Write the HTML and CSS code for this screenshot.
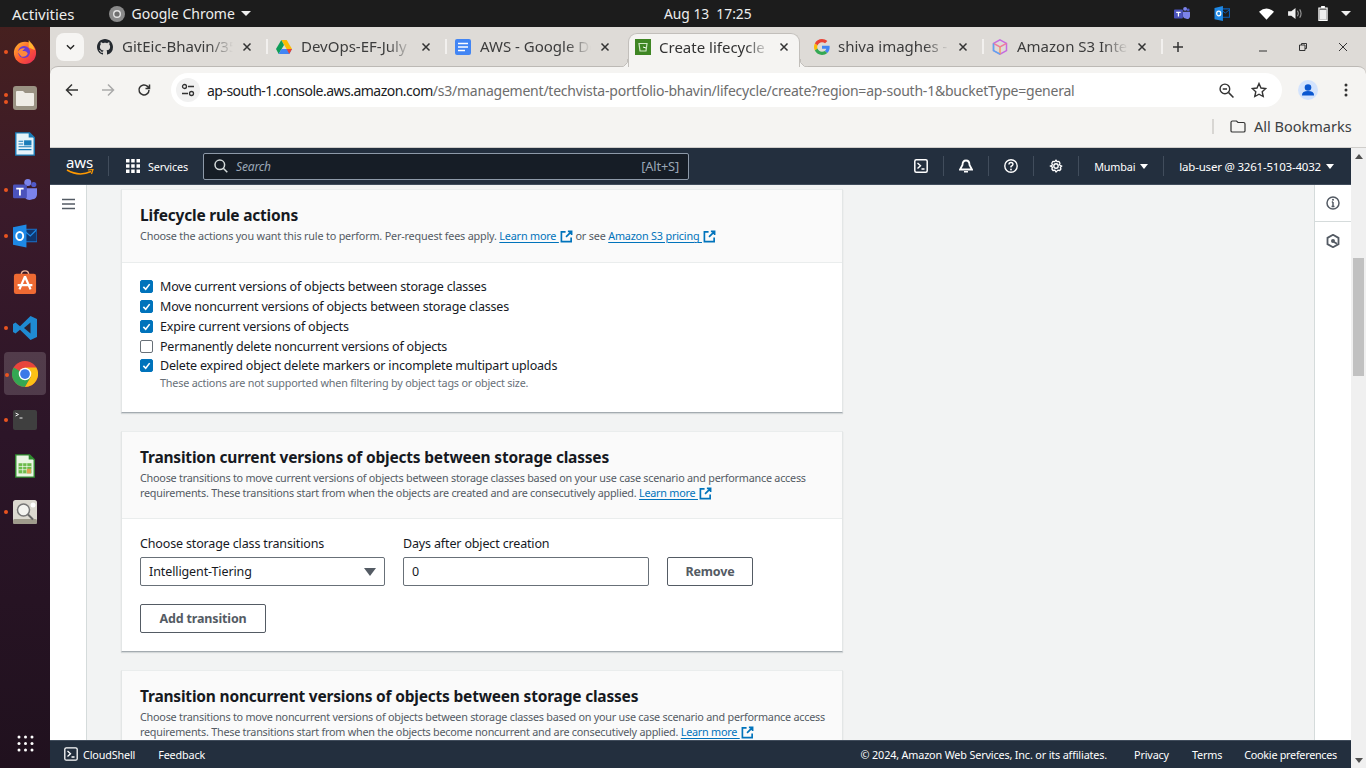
FILE: index.html
```html
<!DOCTYPE html>
<html lang="en">
<head>
<meta charset="utf-8">
<title>Create lifecycle rule</title>
<link rel="stylesheet" href="styles.css">
</head>
<body>
<svg class="defs" width="0" height="0"><defs><symbol id="x" viewBox="0 0 10 10"><path d="M1.500 1.500l7 7M8.500 1.500l-7 7" stroke="#333" stroke-width="1.500"/></symbol></defs></svg>
<div class="topbar">
  <span class="activities">Activities</span>
  <span class="appmenu">
    <svg class="appicon" viewBox="0 0 16 16"><circle cx="8" cy="8" r="8" fill="#8a8a8a"/><circle cx="8" cy="8" r="4" fill="#e4e4e4"/><circle cx="8" cy="8" r="2.600" fill="#6e6e6e"/></svg>
    Google Chrome <i class="caret-w"></i>
  </span>
  <span class="clock">Aug 13&nbsp; 17:25</span>
  <span class="tray">
    <svg class="t-teams" viewBox="0 0 18 16"><circle cx="12.500" cy="2.800" r="2.200" fill="#7b83eb"/><circle cx="16" cy="4" r="1.600" fill="#5059c9"/><path d="M10 6h8v5a3 3 0 0 1-4 3 4 4 0 0 1-4-3z" fill="#7b83eb"/><rect x="0" y="3.500" width="10" height="10" rx="1" fill="#4b53bc"/><path d="M2.500 6h5v1.300h-1.800v4.200h-1.400v-4.200h-1.800z" fill="#fff"/></svg>
    <svg class="t-outlook" viewBox="0 0 16 16"><path d="M7 3h9v9H7z" fill="none" stroke="#0a5db5" stroke-width="1.200"/><path d="M7 4l4.500 3.500L16 4" fill="none" stroke="#0a5db5"/><path d="M0 2l9-2v16l-9-2z" fill="#1e88e5"/><ellipse cx="4.500" cy="8" rx="2.200" ry="2.500" fill="none" stroke="#fff" stroke-width="1.300"/></svg>
    <svg class="t-wifi" viewBox="0 0 16 12"><path d="M0 3.500Q8-3 16 3.500L8 12z" fill="#fff"/></svg>
    <svg class="t-vol" viewBox="0 0 16 14"><path d="M0 4.500h3.500L8 1v12L3.500 9.500H0z" fill="#eee"/><path d="M10 4q2 3 0 6M12.500 2.500q3 4.500 0 9" fill="none" stroke="#999" stroke-width="1.200"/></svg>
    <svg class="t-batt" viewBox="0 0 10 16"><path d="M3 0h4v1.500h3V16H0V1.500h3z" fill="#fff"/><rect x="1.300" y="2.800" width="7.400" height="11.900" fill="#1c1c1c"/><rect x="1.300" y="3.800" width="7.400" height="10.900" fill="#eee"/></svg>
    <i class="caret-w tray-caret"></i>
  </span>
</div>
<div class="desktop">
  <nav class="dock">
    <div class="dock-item"><i class="dot"></i><svg class="dk" viewBox="0 0 26 26"><defs><linearGradient id="fx" x1="0" y1="0" x2="1" y2="1"><stop offset="0" stop-color="#ffbd2f"/><stop offset=".5" stop-color="#ff5a30"/><stop offset="1" stop-color="#e3245c"/></linearGradient></defs><circle cx="13" cy="14" r="12" fill="url(#fx)"/><path d="M17 0q5 5 7 11L17 8z" fill="#ffb52e"/><circle cx="12" cy="13" r="6.500" fill="#6a3bd0"/><path d="M5 13q3-5 8-4l-3 3q5-1 6 3-2 4-7 3" fill="#ff8a3a"/></svg></div>
    <div class="dock-item"><i class="dot dot2"></i><i class="dot dot3"></i><svg class="dk" viewBox="0 0 24 24"><rect width="24" height="24" rx="3" fill="#9a9283"/><path d="M3 6q0-1 1-1h6l2 2h8q1 0 1 1v11q0 1-1 1H4q-1 0-1-1z" fill="#efece6"/></svg></div>
    <div class="dock-item"><svg class="dk" viewBox="0 0 24 26"><path d="M2 1h15l5 5v19H2z" fill="#e6f3fa" stroke="#1a7cb8" stroke-width="1.500"/><path d="M16 0l6 6h-6z" fill="#1a7cb8"/><path d="M5 10h5M5 13h5M5 16h14M5 19h14" stroke="#1a7cb8" stroke-width="1.300"/><rect x="11" y="9" width="8" height="5.500" fill="#1a7cb8"/></svg></div>
    <div class="dock-item"><i class="dot"></i><svg class="dk dk-teams" viewBox="0 0 26 26"><circle cx="16" cy="5" r="3.800" fill="#7b83eb"/><circle cx="22.500" cy="7" r="2.800" fill="#5059c9"/><path d="M11 11h15v7a5 5 0 0 1-5 5 7 7 0 0 1-10-5z" fill="#7b83eb"/><rect y="7" width="15" height="15" rx="1.500" fill="#4b53bc"/><path d="M3.500 10.500h8v2h-3v6.500h-2v-6.500h-3z" fill="#fff"/></svg></div>
    <div class="dock-item"><i class="dot"></i><svg class="dk" viewBox="0 0 25 24"><path d="M10 5h15v13H10z" fill="#10366e" stroke="#1976d2"/><path d="M11 6l7 6 6-6" fill="none" stroke="#1e88e5" stroke-width="1.300"/><path d="M0 3l14-3v24L0 21z" fill="#1e88e5"/><ellipse cx="7" cy="12" rx="3.600" ry="4.200" fill="none" stroke="#fff" stroke-width="2"/></svg></div>
    <div class="dock-item"><svg class="dk" viewBox="0 0 24 26"><path d="M8 5q0-4 4-4t4 4" fill="none" stroke="#f1b79b" stroke-width="1.500"/><rect y="4" width="24" height="22" rx="2.500" fill="#ee6a33"/><path d="M12 7l-6 14M12 7l6 14M4 16.500h16" stroke="#fff" stroke-width="2.400" fill="none"/></svg></div>
    <div class="dock-item"><i class="dot"></i><svg class="dk" viewBox="0 0 24 24"><path d="M17.500 0L24 3v18l-6.500 3L7 13.800 2.500 17.500 0 16V8l2.500-1.500L7 10.200z" fill="#1f8ad2"/><path d="M17.500 6.500L11 12l6.500 5.500z" fill="#2c2030"/></svg></div>
    <div class="dock-item dock-active"><i class="dot"></i><svg class="dk dk-chrome" viewBox="0 0 48 48"><circle cx="24" cy="24" r="24" fill="#e8453c"/><path d="M24 24L3.200 12A24 24 0 0 0 24 48l10.500-18z" fill="#34a853"/><path d="M24 12h20.800A24 24 0 0 1 24 48l10.400-18z" fill="#fbc116"/><circle cx="24" cy="24" r="11.500" fill="#fff"/><circle cx="24" cy="24" r="9" fill="#3b79e8"/></svg></div>
    <div class="dock-item"><i class="dot"></i><svg class="dk" viewBox="0 0 24 20"><rect width="24" height="20" rx="2" fill="#3f3f3f"/><path d="M2.500 3l3 1.500-3 1.500M6.500 8h3" stroke="#eee" fill="none"/></svg></div>
    <div class="dock-item"><svg class="dk" viewBox="0 0 24 26"><path d="M2 1h15l5 5v19H2z" fill="#eaf6e4" stroke="#2f8a2f" stroke-width="1.500"/><path d="M16 0l6 6h-6z" fill="#2f8a2f"/><path d="M5 10h14v11H5z" fill="#6cbb4c"/><path d="M5 13.500h14M5 17h14M9.500 10v11M14 10v11" stroke="#fff" stroke-width=".7"/><rect x="14" y="16" width="4.500" height="5" fill="#e0a050"/></svg></div>
    <div class="dock-item"><i class="dot"></i><svg class="dk" viewBox="0 0 24 24"><rect width="24" height="24" rx="2.500" fill="#dcd9d0"/><rect y="19" width="24" height="5" rx="1.500" fill="#9f9b8c"/><circle cx="10.500" cy="10" r="6" fill="#f4f4f0" stroke="#777" stroke-width="1.500"/><path d="M15 14.500l5 5" stroke="#666" stroke-width="2"/><circle cx="20" cy="5" r="2.500" fill="#fff"/></svg></div>
    <div class="dock-grid"><svg class="gridicon" viewBox="0 0 17 17" fill="#fff"><circle cx="2" cy="2" r="1.500"/><circle cx="8.500" cy="2" r="1.500"/><circle cx="15" cy="2" r="1.500"/><circle cx="2" cy="8.500" r="1.500"/><circle cx="8.500" cy="8.500" r="1.500"/><circle cx="15" cy="8.500" r="1.500"/><circle cx="2" cy="15" r="1.500"/><circle cx="8.500" cy="15" r="1.500"/><circle cx="15" cy="15" r="1.500"/></svg></div>
  </nav>
  <div class="chrome">
    <div class="tabstrip">
      <span class="tabsearch"><svg viewBox="0 0 10 6" class="chev"><path d="M1 1l4 4 4-4" fill="none" stroke="#222" stroke-width="1.500"/></svg></span>
      <div class="tab"><svg class="fav" viewBox="0 0 16 16"><path fill="#24292f" d="M8 0C3.580 0 0 3.580 0 8c0 3.540 2.290 6.530 5.470 7.590.4.070.55-.17.55-.38 0-.19-.01-.82-.01-1.490-2.010.37-2.530-.49-2.690-.94-.09-.23-.48-.94-.82-1.130-.28-.15-.68-.52-.01-.53.630-.01 1.080.58 1.230.82.720 1.210 1.870.87 2.330.66.070-.52.280-.87.510-1.070-1.780-.2-3.640-.89-3.640-3.950 0-.87.310-1.590.82-2.150-.08-.2-.36-1.020.08-2.120 0 0 .67-.21 2.200.82.640-.18 1.320-.27 2-.27s1.360.09 2 .27c1.530-1.040 2.200-.82 2.200-.82.44 1.100.16 1.920.08 2.120.51.560.82 1.270.82 2.150 0 3.070-1.870 3.750-3.650 3.950.29.250.54.730.54 1.480 0 1.070-.01 1.930-.01 2.200 0 .21.150.46.550.38A8.010 8.010 0 0 0 16 8c0-4.420-3.580-8-8-8z"/></svg><span class="tabtitle">GitEic-Bhavin/35</span><svg class="tabx"><use href="#x"/></svg></div>
      <div class="tab tab-sep"><svg class="fav" viewBox="0 0 16 14"><path d="M5.300 0h5.400l5.300 9h-5.400z" fill="#fbbc04"/><path d="M5.300 0L0 9l2.700 5 5.300-9z" fill="#0f9d58"/><path d="M2.700 14h10.600L16 9H5.400z" fill="#4285f4"/><path d="M10.600 9h5.400l-2.700 5z" fill="#ea4335"/></svg><span class="tabtitle">DevOps-EF-July</span><svg class="tabx"><use href="#x"/></svg></div>
      <div class="tab tab-sep tab-preact"><svg class="fav" viewBox="0 0 16 16"><rect width="16" height="16" rx="2" fill="#4285f4"/><path d="M3 4.500h10M3 8h10M3 11.500h7" stroke="#fff" stroke-width="1.500"/></svg><span class="tabtitle">AWS - Google Do</span><svg class="tabx"><use href="#x"/></svg></div>
      <div class="tab tab-active"><svg class="fav" viewBox="0 0 16 16"><rect width="16" height="16" fill="#3f8624"/><path d="M4 4.500h8l-1 7.500H5z" fill="none" stroke="#cfe8c4" stroke-width="1.200"/><path d="M8 8l3 1" stroke="#fff"/></svg><span class="tabtitle">Create lifecycle</span><svg class="tabx"><use href="#x"/></svg></div>
      <div class="tab tab-postact"><svg class="fav" viewBox="0 0 48 48"><path fill="#EA4335" d="M24 9.500c3.500 0 6.700 1.200 9.200 3.600l6.900-6.900C35.900 2.400 30.500 0 24 0 14.600 0 6.500 5.400 2.600 13.200l8 6.200C12.400 13.700 17.700 9.500 24 9.500z"/><path fill="#4285F4" d="M47 24.500c0-1.600-.1-3.100-.4-4.500H24v9h12.900c-.6 3-2.200 5.500-4.800 7.200l7.700 6C44.300 37.600 47 31.600 47 24.500z"/><path fill="#FBBC05" d="M10.500 28.600c-.5-1.400-.8-3-.8-4.600s.3-3.200.8-4.600l-8-6.200C.9 16.500 0 20.100 0 24s.9 7.500 2.600 10.800z"/><path fill="#34A853" d="M24 48c6.500 0 11.900-2.100 15.900-5.800l-7.700-6c-2.200 1.500-4.900 2.300-8.200 2.300-6.300 0-11.600-4.200-13.500-9.900l-8 6.200C6.500 42.600 14.600 48 24 48z"/></svg><span class="tabtitle">shiva imaghes - G</span><svg class="tabx"><use href="#x"/></svg></div>
      <div class="tab tab-sep"><svg class="fav" viewBox="0 0 16 16"><path d="M8 .8l6.500 3.600v7.200L8 15.200l-6.500-3.600V4.400z" fill="none" stroke="#c66be0" stroke-width="1.500"/><path d="M1.500 4.400L8 8l6.500-3.600" fill="none" stroke="#f0799c" stroke-width="1.500"/><path d="M8 8v7.200" stroke="#f59a5f" stroke-width="1.500"/><path d="M1.500 4.400v7.200L8 15.200" fill="none" stroke="#5aa9f0" stroke-width="1.500"/></svg><span class="tabtitle">Amazon S3 Intel</span><svg class="tabx"><use href="#x"/></svg></div>
      <div class="tab-newsep"><svg class="plus" viewBox="0 0 12 12"><path d="M6 1v10M1 6h10" stroke="#333" stroke-width="1.500"/></svg></div>
      <div class="winctl">
        <svg viewBox="0 0 10 10"><path d="M1 9h8" stroke="#333" stroke-width="1"/></svg>
        <svg viewBox="0 0 10 10"><path d="M1.500 3h5.500v5.500h-5.500zM3.500 3v-1.500h5v5h-1.500" fill="none" stroke="#333"/></svg>
        <svg viewBox="0 0 10 10"><path d="M1 1l8 8M9 1l-8 8" stroke="#333"/></svg>
      </div>
    </div>
    <div class="toolbar">
      <svg class="tb" viewBox="0 0 14 14"><path d="M13 7H2M7 1.500L1.500 7 7 12.500" fill="none" stroke="#333" stroke-width="1.500"/></svg>
      <svg class="tb tb-fwd" viewBox="0 0 14 14"><path d="M1 7h11M7 1.500L12.500 7 7 12.500" fill="none" stroke="#aaa" stroke-width="1.500"/></svg>
      <svg class="tb tb-rel" viewBox="0 0 14 14"><path d="M12 7a5 5 0 1 1-1.500-3.600L12.500 5.500M12.500 1.500v4h-4" fill="none" stroke="#333" stroke-width="1.500"/></svg>
      <div class="omnibox">
        <span class="tune"><svg viewBox="0 0 14 14"><circle cx="3.500" cy="3.500" r="2" fill="none" stroke="#333" stroke-width="1.300"/><path d="M7 3.500h6M1 10.500h6" stroke="#333" stroke-width="1.300"/><circle cx="10.500" cy="10.500" r="2" fill="none" stroke="#333" stroke-width="1.300"/></svg></span>
        <span class="url"><b>ap-south-1.console.aws.amazon.com</b>/s3/management/techvista-portfolio-bhavin/lifecycle/create?region=ap-south-1&amp;bucketType=general</span>
        <svg class="om zoomi" viewBox="0 0 14 14"><circle cx="5.500" cy="5.500" r="4.500" fill="none" stroke="#333" stroke-width="1.300"/><path d="M3.500 5.500h4M9 9l4.500 4.500" stroke="#333" stroke-width="1.400"/></svg>
        <svg class="om star" viewBox="0 0 16 16"><path d="M8 1.500l2 4.500 4.800.5-3.600 3.200 1 4.800L8 12.200 3.800 14.500l1-4.800L1.200 6.500 6 6z" fill="none" stroke="#333" stroke-width="1.400"/></svg>
      </div>
      <span class="avatar"><svg viewBox="0 0 20 20"><circle cx="10" cy="10" r="10" fill="#d3e3fd"/><circle cx="10" cy="7.500" r="3.300" fill="#0b57d0"/><path d="M4 15q0-4 6-4t6 4v.5H4z" fill="#0b57d0"/></svg></span>
      <svg class="kebab" viewBox="0 0 4 14" fill="#333"><circle cx="2" cy="2" r="1.500"/><circle cx="2" cy="7" r="1.500"/><circle cx="2" cy="12" r="1.500"/></svg>
    </div>
    <div class="bookmarks">
      <i class="bm-sep"></i>
      <svg class="bm-folder" viewBox="0 0 16 13"><path d="M1 2.500q0-1.500 1.500-1.500h4l1.500 1.500h5.500q1.500 0 1.500 1.500v7q0 1-1.500 1h-11q-1.500 0-1.500-1z" fill="none" stroke="#333" stroke-width="1.200"/></svg>
      <span class="bm-label">All Bookmarks</span>
    </div>
    <div class="viewport">
      <div class="page">
        <header class="awsnav">
          <span class="awslogo"><span class="aws-t">aws</span><svg viewBox="0 0 28 7"><path d="M1 1q12 7 24 1.500" fill="none" stroke="#f90" stroke-width="1.500"/><path d="M22 1l5-.5-1.500 4.500" fill="none" stroke="#f90" stroke-width="1.200"/></svg></span>
          <i class="nsep nsep-logo"></i>
          <svg class="svcgrid" viewBox="0 0 14 14" fill="#fff"><path d="M0 0h3.500v3.500H0zM5.200 0h3.500v3.500H5.200zM10.500 0H14v3.500h-3.500zM0 5.200h3.500v3.500H0zM5.200 5.200h3.500v3.500H5.200zM10.500 5.200H14v3.500h-3.500zM0 10.500h3.500V14H0zM5.200 10.500h3.500V14H5.200zM10.500 10.500H14V14h-3.500z"/></svg>
          <span class="nav-services">Services</span>
          <div class="navsearch">
            <svg class="ns-ic" viewBox="0 0 14 14"><circle cx="5.800" cy="5.800" r="4.800" fill="none" stroke="#d5dbdb" stroke-width="1.500"/><path d="M9.300 9.300l4 4" stroke="#d5dbdb" stroke-width="1.500"/></svg>
            <span class="ns-ph">Search</span>
            <span class="ns-key">[Alt+S]</span>
          </div>
          <div class="navright">
            <span class="nitem ni-shell"><svg class="nic" viewBox="0 0 14 14"><rect x=".8" y=".8" width="12.400" height="12.400" rx="1.500" fill="none" stroke="#fff" stroke-width="1.500"/><path d="M3.500 4l3 2.800-3 2.800M7.500 10h3" fill="none" stroke="#fff" stroke-width="1.400"/></svg></span>
            <span class="nitem ni-bell"><svg class="nic" viewBox="0 0 14 14"><path d="M7 1.500q3.500 0 3.500 4.500l2.500 4.500H1L3.500 6Q3.500 1.500 7 1.500z" fill="none" stroke="#fff" stroke-width="1.800"/><path d="M5 12h4v1.500H5z" fill="#fff"/></svg></span>
            <span class="nitem ni-help"><svg class="nic" viewBox="0 0 14 14"><circle cx="7" cy="7" r="6.200" fill="none" stroke="#fff" stroke-width="1.400"/><path d="M5 5.500q0-2 2-2t2 1.800Q9 6.500 7 7.500v1" fill="none" stroke="#fff" stroke-width="1.400"/><circle cx="7" cy="10.500" r=".9" fill="#fff"/></svg></span>
            <span class="nitem ni-gear"><svg class="nic" viewBox="0 0 14 14"><circle cx="7" cy="7" r="2.200" fill="none" stroke="#fff" stroke-width="1.400"/><path d="M7 1l1 1.700 2-.2 1 1.800-.7 1.700L12.800 7l-1.500 1.200.6 1.800-1.200 1.500-1.800-.4L7 13l-1.100-1.900-1.800.4L2.900 10l.6-1.800L1.200 7l2.300-1-.7-1.700 1-1.800 2 .2z" fill="none" stroke="#fff" stroke-width="1.300" stroke-linejoin="round"/></svg></span>
            <span class="nitem ni-region">Mumbai <i class="caret-w caret-s"></i></span>
            <span class="nitem ni-user">lab-user @ 3261-5103-4032 <i class="caret-w caret-s"></i></span>
          </div>
        </header>
        <div class="workspace">
          <aside class="sidenav"><svg class="burger" viewBox="0 0 14 12"><path d="M0 1.200h14M0 6h14M0 10.800h14" stroke="#545b64" stroke-width="1.700"/></svg></aside>
          <main class="content">
            <section class="card">
              <div class="card-head card-head-1">
                <h2>Lifecycle rule actions</h2>
                <p class="desc">Choose the actions you want this rule to perform. Per-request fees apply. <a>Learn more <svg class="ext" viewBox="0 0 14 14"><path d="M6 2H1.500v10.500H12V8M8.500 1.500h4v4M12.500 1.500L6.500 7.500" fill="none" stroke="currentColor" stroke-width="1.800"/></svg></a> or see <a>Amazon S3 pricing <svg class="ext" viewBox="0 0 14 14"><path d="M6 2H1.500v10.500H12V8M8.500 1.500h4v4M12.500 1.500L6.500 7.500" fill="none" stroke="currentColor" stroke-width="1.800"/></svg></a></p>
              </div>
              <div class="card-body body-1">
                <label class="chk"><i class="box on"><svg viewBox="0 0 14 14"><path d="M3 7.500l3 3 5-6.500" fill="none" stroke="#fff" stroke-width="2"/></svg></i>Move current versions of objects between storage classes</label>
                <label class="chk"><i class="box on"><svg viewBox="0 0 14 14"><path d="M3 7.500l3 3 5-6.500" fill="none" stroke="#fff" stroke-width="2"/></svg></i>Move noncurrent versions of objects between storage classes</label>
                <label class="chk"><i class="box on"><svg viewBox="0 0 14 14"><path d="M3 7.500l3 3 5-6.500" fill="none" stroke="#fff" stroke-width="2"/></svg></i>Expire current versions of objects</label>
                <label class="chk"><i class="box"></i>Permanently delete noncurrent versions of objects</label>
                <label class="chk chk-last"><i class="box on"><svg viewBox="0 0 14 14"><path d="M3 7.500l3 3 5-6.500" fill="none" stroke="#fff" stroke-width="2"/></svg></i>Delete expired object delete markers or incomplete multipart uploads</label>
                <p class="note">These actions are not supported when filtering by object tags or object size.</p>
              </div>
            </section>
            <section class="card">
              <div class="card-head card-head-2">
                <h2>Transition current versions of objects between storage classes</h2>
                <p class="desc">Choose transitions to move current versions of objects between storage classes based on your use case scenario and performance access requirements. These transitions start from when the objects are created and are consecutively applied. <a>Learn more <svg class="ext" viewBox="0 0 14 14"><path d="M6 2H1.500v10.500H12V8M8.500 1.500h4v4M12.500 1.500L6.500 7.500" fill="none" stroke="currentColor" stroke-width="1.800"/></svg></a></p>
              </div>
              <div class="card-body body-2">
                <div class="formrow">
                  <div class="field f-sel"><span class="flabel">Choose storage class transitions</span><div class="inp inp-sel">Intelligent-Tiering<i class="caret-d"></i></div></div>
                  <div class="field f-days"><span class="flabel">Days after object creation</span><div class="inp">0</div></div>
                  <span class="btn btn-remove">Remove</span>
                </div>
                <span class="btn btn-add">Add transition</span>
              </div>
            </section>
            <section class="card">
              <div class="card-head card-head-2">
                <h2>Transition noncurrent versions of objects between storage classes</h2>
                <p class="desc">Choose transitions to move noncurrent versions of objects between storage classes based on your use case scenario and performance access requirements. These transitions start from when the objects become noncurrent and are consecutively applied. <a>Learn more <svg class="ext" viewBox="0 0 14 14"><path d="M6 2H1.500v10.500H12V8M8.500 1.500h4v4M12.500 1.500L6.500 7.500" fill="none" stroke="currentColor" stroke-width="1.800"/></svg></a></p>
              </div>
            </section>
          </main>
          <aside class="tools">
            <div class="tool"><svg viewBox="0 0 14 14"><circle cx="7" cy="7" r="6" fill="none" stroke="#545b64" stroke-width="1.500"/><path d="M7 6v4.500M5.500 10.500h3M5.800 6H7" stroke="#545b64" stroke-width="1.500"/><circle cx="7" cy="3.800" r="1" fill="#545b64"/></svg></div>
            <div class="tool"><svg viewBox="0 0 14 14"><path d="M7 .8l5.500 3.100v6.200L7 13.200 1.500 10.100V3.900z" fill="none" stroke="#545b64" stroke-width="1.800"/><circle cx="7" cy="7" r="2" fill="#545b64"/><path d="M8 8l3 1.800" stroke="#545b64" stroke-width="1.800"/></svg></div>
          </aside>
        </div>
        <footer class="awsfoot">
          <svg class="ft-shell" viewBox="0 0 14 14"><rect x=".8" y=".8" width="12.400" height="12.400" rx="1.500" fill="none" stroke="#fff" stroke-width="1.300"/><path d="M3.500 4l3 2.800-3 2.800M7.500 10h3" fill="none" stroke="#fff" stroke-width="1.300"/></svg>
          <span class="ft-cs">CloudShell</span>
          <span class="ft-fb">Feedback</span>
          <span class="ft-copy">© 2024, Amazon Web Services, Inc. or its affiliates.</span>
          <span class="ft-priv">Privacy</span>
          <span class="ft-terms">Terms</span>
          <span class="ft-cookie">Cookie preferences</span>
        </footer>
      </div>
      <div class="scrollbar"><svg class="sb-up" viewBox="0 0 8 5"><path d="M4 0l4 5H0z" fill="#505050"/></svg><i class="sb-thumb"></i><svg class="sb-down" viewBox="0 0 8 5"><path d="M4 5l4-5H0z" fill="#505050"/></svg></div>
    </div>
  </div>
</div>
</body>
</html>
```
FILE: styles.css
```css
* { box-sizing: border-box; }
html, body { margin: 0; padding: 0; width: 1366px; height: 768px; overflow: hidden; }
body { font-family: "Noto Sans", "Open Sans", sans-serif; background: #1c1c1c; }
p, h2 { margin: 0; }
i { display: block; font-style: normal; }
svg { display: block; flex: none; }
.defs { position: absolute; }

.topbar { height: 27px; background: #1c1c1c; color: #eee; display: flex; align-items: center; font-size: 14px; position: relative; }
.activities { margin-left: 12px; font-size: 15px; }
.appmenu { margin-left: 34px; display: flex; align-items: center; gap: 6px; }
.appicon { width: 16px; height: 16px; margin-right: 1px; }
.caret-w { width: 0; height: 0; border-left: 5px solid transparent; border-right: 5px solid transparent; border-top: 5px solid #eee; }
.clock { position: absolute; left: 664px; top: 5px; font-size: 13.800px; line-height: 17px; }
.tray { margin-left: auto; display: flex; align-items: center; }
.t-teams { width: 16px; height: 15px; margin-right: 24px; }
.t-outlook { width: 16px; height: 15px; margin-right: 29px; }
.t-wifi { width: 15px; height: 12px; margin-right: 14px; }
.t-vol { width: 15px; height: 13px; margin-right: 15px; }
.t-batt { width: 10px; height: 15px; margin-right: 13px; }
.tray-caret { margin-right: 15px; }

.desktop { display: flex; height: 741px; }
.dock { width: 50px; flex: none; background: linear-gradient(180deg, #46201f 0%, #3a1a2a 25%, #2c1528 55%, #20111e 100%); display: flex; flex-direction: column; padding-top: 2px; }
.dock-item { height: 46px; flex: none; display: flex; align-items: center; justify-content: center; position: relative; }
.dk { width: 24px; height: 24px; }
.dock-active { background: rgba(255,255,255,.16); border-radius: 4px; margin: 1px 4px 2px; height: 43px; }
.dock-active .dot { left: 1px; }
.dock-active .dk-chrome { width: 26px; height: 26px; }
.dot { position: absolute; left: 4px; top: 21px; width: 4px; height: 4px; border-radius: 50%; background: #e95420; }
.dot2 { top: 18px; }
.dot3 { top: 25px; }
.dock-grid { margin-top: auto; height: 46px; display: flex; align-items: center; justify-content: center; padding-bottom: 3px; }
.gridicon { width: 17px; height: 17px; }

.chrome { width: 1316px; display: flex; flex-direction: column; background: #dedbd7; }
.tabstrip { height: 39px; flex: none; background: #dedbd7; display: flex; align-items: center; position: relative; z-index: 1; padding-left: 6px; }
.tabsearch { width: 28px; height: 28px; background: #f6f5f3; border-radius: 8px; display: flex; align-items: center; justify-content: center; margin-right: 3px; }
.chev { width: 9px; height: 6px; }
.tab { width: 179px; height: 39px; flex: none; display: flex; align-items: center; padding-left: 10px; font-size: 15px; color: #3c3c3c; position: relative; }
.tab-sep::before { content: ""; position: absolute; left: 0; top: 12px; height: 15px; border-left: 2px solid #f2f0ee; }
.tab-active { background: #f5f4f2; height: 34px; margin-top: 6px; align-self: flex-start; border-radius: 9px 9px 0 0; border: 1px solid #c2bfbb; border-bottom: 0; color: #333; padding: 0 0 7px 6px; margin-left: 4px; width: 172px; }
.tab-active .fav { margin-right: 8px; }
.tab-active::before, .tab-active::after { content: ""; position: absolute; bottom: 0; width: 8px; height: 8px; }
.tab-active::before { left: -9px; background: radial-gradient(circle at 0 0, transparent 7.500px, #c2bfbb 7.500px, #c2bfbb 8.200px, #f5f4f2 8.500px); }
.tab-active::after { right: -9px; background: radial-gradient(circle at 100% 0, transparent 7.500px, #c2bfbb 7.500px, #c2bfbb 8.200px, #f5f4f2 8.500px); }
.tab-postact { margin-left: 3px; padding-left: 11px; }
.fav { width: 16px; height: 16px; margin-right: 9px; }
.tab-postact .fav { margin-right: 8px; }
.tabtitle { width: 111px; margin-bottom: 1px; overflow: hidden; white-space: nowrap; -webkit-mask-image: linear-gradient(90deg, #000 78%, transparent 100%); mask-image: linear-gradient(90deg, #000 78%, transparent 100%); }
.tabx { margin-left: 9px; width: 10px; height: 10px; }
.tab-newsep { position: relative; padding-left: 9px; height: 15px; display: flex; align-items: center; border-left: 2px solid #f2f0ee; }
.plus { width: 12px; height: 12px; }
.winctl { margin-left: auto; display: flex; gap: 30px; padding-right: 18px; }
.winctl svg { width: 10px; height: 10px; }

.toolbar { height: 46px; flex: none; background: #f5f4f2; display: flex; align-items: center; padding-left: 15px; border-radius: 8px 8px 0 0; border-top: 1px solid #bcb9b5; }
.tb { width: 14px; height: 14px; margin-right: 22px; }
.tb-rel { margin-right: 0; }
.omnibox { margin-left: 20px; width: 1111px; height: 34px; border-radius: 17px; background: #fff; display: flex; align-items: center; padding-left: 5px; margin-top: 1px; }
.tune { width: 24px; height: 24px; border-radius: 50%; background: #f1f1f1; display: flex; align-items: center; justify-content: center; }
.tune svg { width: 14px; height: 14px; }
.url { margin-left: 7px; font-size: 14px; letter-spacing: -.225px; color: #6d6d6d; white-space: nowrap; width: 1012px; overflow: hidden; }
.url b { font-weight: 400; color: #202124; letter-spacing: -.52px; }
.om { width: 15px; height: 15px; }
.star { margin-left: 17px; width: 16px; height: 16px; }
.avatar { margin-left: 16px; width: 20px; height: 20px; margin-top: 1px; }
.kebab { margin-left: 26px; width: 4px; height: 14px; margin-top: 1px; }

.bookmarks { height: 36px; flex: none; background: #f5f4f2; display: flex; align-items: center; padding: 0 0 7px 1162px; border-bottom: 1px solid #d0cecb; }
.bm-sep { width: 0; height: 15px; border-left: 2px solid #d8d6d3; }
.bm-folder { width: 16px; height: 13px; margin-left: 16px; }
.bm-label { margin-left: 8px; font-size: 14.500px; color: #3c4043; white-space: nowrap; }

.viewport { flex: 1; display: flex; min-height: 0; }
.page { width: 1301px; display: flex; flex-direction: column; min-height: 0; }
.awsnav { height: 37px; flex: none; background: #232f3e; border-bottom: 1px solid #414d5c; display: flex; align-items: center; color: #fff; font-size: 10.800px; letter-spacing: -.15px; }
.awslogo { margin-left: 15px; width: 29px; display: flex; flex-direction: column; align-items: center; }
.aws-t { font-size: 15px; line-height: 11px; letter-spacing: -.2px; }
.awslogo svg { width: 28px; height: 7px; margin-top: 1px; }
.nsep { width: 1px; height: 20px; background: #414d5c; }
.nsep-logo { margin-left: 14px; }
.svcgrid { width: 14px; height: 14px; margin-left: 17px; }
.nav-services { margin-left: 8px; }
.navsearch { margin-left: 15px; width: 486px; height: 27px; background: #161d26; border: 1px solid #8d99a8; border-radius: 2px; display: flex; align-items: center; padding: 0 9px 0 10px; }
.ns-ic { width: 14px; height: 14px; }
.ns-ph { margin-left: 8px; font-style: italic; color: #9ba7b6; font-size: 12px; }
.ns-key { margin-left: auto; color: #9ba7b6; font-size: 12.800px; }
.navright { display: flex; align-items: center; margin-left: auto; height: 100%; }
.nitem { display: flex; align-items: center; height: 20px; gap: 5px; white-space: nowrap; }
.nitem + .nitem { border-left: 1px solid #414d5c; }
.nic { width: 14px; height: 14px; }
.ni-shell { padding-right: 15px; }
.ni-bell, .ni-help, .ni-gear { padding: 0 15px; }
.ni-region { padding: 0 15px; }
.ni-user { padding: 0 17px 0 15px; font-size: 11.500px; letter-spacing: -.2px; }
.caret-s { border-left-width: 4px; border-right-width: 4px; border-top-width: 5px; border-top-color: #fff; }

.workspace { flex: 1; display: flex; background: #f2f3f3; min-height: 0; overflow: hidden; }
.sidenav { width: 37px; flex: none; background: #fff; border-right: 1px solid #d5dbdb; padding: 13px 0 0 12px; }
.burger { width: 13px; height: 12px; }
.content { flex: 1; padding: 4px 0 0 35px; display: flex; flex-direction: column; gap: 18px; overflow: hidden; margin-left: -1px; }
.tools { width: 37px; flex: none; background: #fff; border-left: 1px solid #d5dbdb; }
.tool { height: 37px; border-bottom: 1px solid #d5dbdb; display: flex; align-items: center; justify-content: center; }
.tool + .tool { border-bottom: 0; }
.tool svg { width: 14px; height: 14px; }

.card { width: 722px; flex: none; background: #fff; border: 1px solid #e3e6e6; border-top-color: #eaeded; border-bottom: 1px solid #a4abb0; box-shadow: 0 1px 1px rgba(0,28,36,.12); }
.card-head { background: #fafafa; border-bottom: 1px solid #eaeded; padding: 14px 10px 0 18px; color: #16191f; }
.card-head-1 { height: 73px; }
.card-head-2 { height: 87px; }
h2 { font-size: 15.500px; line-height: 22px; font-weight: 700; letter-spacing: -.2px; color: #16191f; }
.desc { font-size: 10.800px; line-height: 14.500px; letter-spacing: -.23px; color: #545b64; margin-top: 3px; }
.card-head-1 .desc { letter-spacing: -.18px; }
.desc a { color: #0073bb; text-decoration: underline; text-underline-offset: 2px; }
.ext { display: inline-block; width: 13px; height: 13px; vertical-align: -3px; margin-left: 1px; }
.card-body { padding: 0 18px; }
.body-1 { height: 149px; padding-top: 13px; }
.body-2 { height: 132px; padding-top: 17px; }
.chk { display: flex; align-items: center; height: 20px; font-size: 12.500px; letter-spacing: -.2px; color: #16191f; }
.chk-last { margin-top: -1px; letter-spacing: -.18px; }
.box { width: 13px; height: 13px; border-radius: 2px; margin-right: 7px; border: 1px solid #687078; background: #fff; flex: none; }
.box.on { background: #0073bb; border-color: #0073bb; }
.box svg { width: 11px; height: 11px; }
.note { margin-left: 20px; font-size: 10.800px; letter-spacing: -.19px; line-height: 15px; color: #687078; }
.formrow { display: flex; align-items: flex-end; }
.field { display: flex; flex-direction: column; }
.f-sel { width: 245px; margin-right: 18px; }
.f-days { width: 246px; margin-right: 18px; }
.flabel { font-size: 12.500px; letter-spacing: -.15px; line-height: 16px; color: #16191f; margin-bottom: 5px; }
.inp { height: 29px; border: 1px solid #687078; border-radius: 2px; background: #fff; font-size: 12.500px; letter-spacing: -.1px; line-height: 27px; padding: 0 8px; color: #16191f; display: flex; align-items: center; justify-content: space-between; }
.caret-d { width: 0; height: 0; border-left: 6px solid transparent; border-right: 6px solid transparent; border-top: 8px solid #545b64; }
.inp-sel { padding-right: 8px; }
.btn { display: flex; align-items: center; justify-content: center; height: 29px; border: 1px solid #545b64; border-radius: 2px; font-size: 12.500px; letter-spacing: -.15px; font-weight: 700; color: #545b64; background: #fff; }
.btn-remove { width: 86px; }
.btn-add { width: 126px; margin-top: 18px; }

.awsfoot { height: 28px; flex: none; background: #232f3e; border-top: 1px solid #414d5c; padding-bottom: 1px; display: flex; align-items: center; color: #fff; font-size: 10.800px; letter-spacing: -.15px; white-space: nowrap; }
.ft-shell { width: 14px; height: 14px; margin-left: 14px; }
.ft-cs { margin-left: 5px; }
.ft-fb { margin-left: 23px; }
.ft-copy { margin-left: auto; }
.ft-priv { margin-left: 27px; }
.ft-terms { margin-left: 23px; }
.ft-cookie { margin-left: 22px; margin-right: 14px; letter-spacing: -.27px; }

.scrollbar { width: 15px; flex: none; background: #f0f0f0; display: flex; flex-direction: column; align-items: center; padding: 6px 0 5px; }
.sb-up, .sb-down { width: 8px; height: 5px; }
.sb-thumb { width: 11px; height: 118px; background: #c1c1c1; margin-top: 99px; }
.sb-down { margin-top: auto; }
```
